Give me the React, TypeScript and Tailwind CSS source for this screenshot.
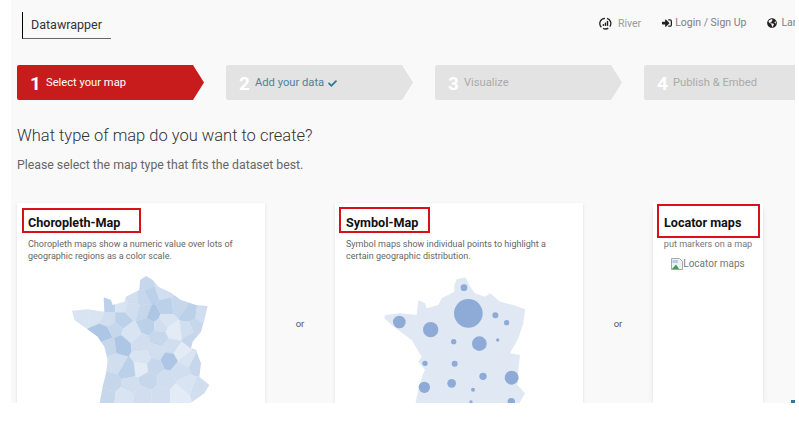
import React from 'react';
import { FaCheck, FaGlobeAmericas, FaSignInAlt } from 'react-icons/fa';

type Point = [number, number];

const SHADES = ['#adc6e5', '#bbd0e9', '#c6d7ec', '#d0deef', '#d9e4f3', '#e3ebf6'];

// x, y, shade index
const DEPARTMENTS: [number, number, number][] = [
    [225, 40, 2], [240, 72, 1], [275, 60, 3], [115, 105, 1], [185, 85, 3], [150, 105, 4], [215, 85, 2],
    [30, 130, 4], [75, 130, 4], [115, 150, 3], [150, 150, 1], [185, 115, 3], [220, 125, 2], [245, 135, 0],
    [230, 165, 1], [285, 115, 1], [325, 110, 2], [355, 130, 1], [395, 135, 3], [375, 170, 2], [270, 165, 3],
    [285, 150, 4], [310, 185, 5], [350, 180, 3], [365, 205, 2], [100, 190, 0], [130, 175, 2], [180, 190, 4],
    [150, 225, 0], [115, 230, 2], [210, 220, 3], [265, 205, 2], [300, 230, 3], [330, 250, 5], [295, 270, 0],
    [255, 245, 3], [215, 265, 4], [210, 295, 5], [170, 300, 1], [135, 280, 3], [250, 290, 2], [375, 285, 2],
    [345, 270, 4], [330, 300, 3], [280, 330, 3], [230, 330, 2], [180, 345, 3], [120, 340, 2], [105, 375, 2],
    [160, 380, 4], [215, 375, 3], [270, 375, 3], [325, 375, 5], [380, 355, 3], [350, 345, 4],
];

const CHORO_OUTLINE: Point[] = [
    [207, 30], [225, 18], [245, 30], [262, 50], [300, 68], [330, 90], [375, 105], [410, 108], [400, 150], [390, 185],
    [365, 215], [360, 235], [375, 240], [390, 280], [385, 320], [415, 345], [400, 370], [350, 405], [85, 405], [95, 350],
    [105, 310], [110, 270], [100, 230], [80, 200], [45, 175], [10, 150], [3, 122], [50, 118], [100, 125], [98, 82],
    [120, 90], [125, 105], [160, 95], [165, 80], [205, 60],
];

const SYMBOL_OUTLINE: Point[] = [
    [238, 45], [245, 28], [272, 22], [285, 50], [300, 70], [330, 80], [345, 70], [375, 95], [415, 105], [450, 118],
    [445, 160], [430, 205], [405, 250], [435, 255], [430, 300], [427, 345], [450, 370], [430, 405], [120, 405], [135, 340],
    [145, 310], [150, 300], [130, 275], [140, 260], [110, 210], [50, 165], [28, 145], [30, 135], [75, 130], [125, 135],
    [130, 90], [150, 100], [155, 115], [190, 105], [200, 85], [238, 65],
];

// x, y, r
const BUBBLES: [number, number, number][] = [
    [267, 53, 10], [280, 130, 43], [361, 136, 9], [395, 158, 8], [73, 156, 19], [167, 179, 23], [236, 215, 8],
    [313, 221, 22], [368, 210, 5], [150, 280, 8], [239, 281, 9], [324, 319, 11], [410, 323, 21], [230, 340, 13],
    [148, 352, 17], [294, 359, 6], [409, 395, 11], [288, 396, 5],
];

const toPoints = (pts: Point[]) => pts.map((p) => p.join(',')).join(' ');

// keep the part of the polygon that is nearer to a than to b
const clipCell = (poly: Point[], a: Point, b: Point) => {
    const mx = (a[0] + b[0]) / 2;
    const my = (a[1] + b[1]) / 2;
    const nx = b[0] - a[0];
    const ny = b[1] - a[1];
    const side = (p: Point) => (p[0] - mx) * nx + (p[1] - my) * ny;
    const out: Point[] = [];
    poly.forEach((p, i) => {
        const q = poly[(i + 1) % poly.length];
        const sp = side(p);
        const sq = side(q);
        if (sp <= 0) out.push(p);
        if (sp < 0 !== sq < 0) {
            const t = sp / (sp - sq);
            out.push([p[0] + (q[0] - p[0]) * t, p[1] + (q[1] - p[1]) * t]);
        }
    });
    return out;
};

const departmentCell = (index: number) => {
    const [x, y] = DEPARTMENTS[index];
    let cell: Point[] = [[0, 0], [450, 0], [450, 405], [0, 405]];
    DEPARTMENTS.forEach((d, i) => {
        if (i !== index) cell = clipCell(cell, [x, y], [d[0], d[1]]);
    });
    return cell;
};

const ChoroplethMap = () => (
    <svg viewBox="0 0 450 405" className="w-[150px] h-[135px] block blur-[0.6px]">
        <defs>
            <clipPath id="choro-france">
                <polygon points={toPoints(CHORO_OUTLINE)} />
            </clipPath>
        </defs>
        <g clipPath="url(#choro-france)">
            {DEPARTMENTS.map((d, i) => (
                <polygon key={i} points={toPoints(departmentCell(i))} fill={SHADES[d[2]]} stroke={SHADES[d[2]]} strokeWidth={1} />
            ))}
        </g>
    </svg>
);

const SymbolMap = () => (
    <svg viewBox="0 0 450 405" className="w-[150px] h-[135px] block blur-[0.3px]">
        <polygon points={toPoints(SYMBOL_OUTLINE)} fill="#e0e8f4" />
        {BUBBLES.map(([cx, cy, r], i) => (
            <circle key={i} cx={cx} cy={cy} r={r} fill="#8eaad6" />
        ))}
    </svg>
);

const RiverIcon = () => (
    <svg viewBox="0 0 14 14" className="w-[13px] h-[13px] shrink-0">
        <path d="M2.6 11A5.6 5.6 0 0 1 6.4 1.4M8.6 1.6A5.6 5.6 0 0 1 11.6 10.4M10 12A5.6 5.6 0 0 1 4.4 12.2" fill="none" stroke="#222" strokeWidth="1.4" />
        <rect x="4" y="7.6" width="1.5" height="2" fill="#222" />
        <rect x="6.2" y="6" width="1.5" height="3.6" fill="#222" />
        <rect x="8.4" y="4.2" width="1.5" height="5.4" fill="#222" />
    </svg>
);

const BrokenImage = () => (
    <svg viewBox="0 0 12 12" className="w-[12px] h-[12px] shrink-0">
        <path d="M0.5 0.5H8.5L11.5 3.5V11.5H0.5Z" fill="#eef2f6" stroke="#a8a8a8" />
        <path d="M1 11L5 6.5L8 11Z" fill="#4c9a46" />
        <path d="M1.5 2H7V5H1.5Z" fill="#b7cbe8" />
    </svg>
);

const STEPS = [
    { n: '1', label: 'Select your map', active: true },
    { n: '2', label: 'Add your data', done: true },
    { n: '3', label: 'Visualize' },
    { n: '4', label: 'Publish & Embed' },
];

export default function App() {
    return (
        <div className="w-[799px] h-[430px] bg-white overflow-hidden font-['Roboto',sans-serif]">
            <div className="relative ml-[11px] w-[784px] h-[403px] bg-[#f9f9f9] overflow-hidden pl-[6px]">
                <div className="flex h-[65px] items-start">
                    <div className="mt-[12px] ml-[5px] w-[89px] h-[27px] border-l border-b border-l-black border-b-[#666] pl-[8px] text-[12.5px] leading-[26px] text-[#333] shrink-0">
                        Datawrapper
                    </div>
                    <div className="flex items-center ml-[488px] mt-[16px] h-[14px] text-[10.5px] whitespace-nowrap">
                        <RiverIcon />
                        <span className="ml-[6px] text-[#999] mt-[1px]">River</span>
                        <FaSignInAlt size={10} className="ml-[21px] text-[#222] shrink-0" />
                        <span className="ml-[3px] text-[#808080]">Login / Sign Up</span>
                        <FaGlobeAmericas size={10} className="ml-[21px] text-[#222] shrink-0" />
                        <span className="ml-[4px] text-[#808080]">Language</span>
                    </div>
                </div>

                <div className="flex gap-[22px] w-[900px]">
                    {STEPS.map((s) => (
                        <div
                            key={s.n}
                            className={`w-[187px] h-[35px] shrink-0 rounded-[2px] flex items-center pl-[13px] pt-[1px] [clip-path:polygon(0_0,176px_0,187px_50%,176px_100%,0_100%)] ${s.active ? 'bg-[#c81c1c]' : 'bg-[#e3e3e3]'}`}
                        >
                            <span className="w-[16px] text-[19px] font-bold text-white leading-none">{s.n}</span>
                            <span className={`text-[11.2px] ${s.active ? 'text-white' : s.done ? 'text-[#4f8297]' : 'text-[#aaa]'}`}>{s.label}</span>
                            {s.done && <FaCheck size={9} className="ml-[4px] text-[#2f7a99]" />}
                        </div>
                    ))}
                </div>

                <h1 className="mt-[24px] text-[16.5px] leading-[24px] font-light text-[#333]">What type of map do you want to create?</h1>
                <p className="mt-[9px] text-[12.3px] leading-[16px] text-[#666]">Please select the map type that fits the dataset best.</p>

                <div className="flex mt-[30px] h-[200px]">
                    <div className="w-[248px] bg-white shadow-sm px-[11px] shrink-0">
                        <h2 className="mt-[12px] text-[12.6px] leading-[15px] font-bold text-[#111]">Choropleth-Map</h2>
                        <p className="mt-[9px] text-[9px] leading-[11.5px] text-[#666]">
                            Choropleth maps show a numeric value over lots of<br />geographic regions as a color scale.
                        </p>
                        <div className="mt-[8px] ml-[43px]">
                            <ChoroplethMap />
                        </div>
                    </div>
                    <div className="w-[70px] shrink-0 pt-[115px] text-center text-[9.5px] leading-[12px] text-[#555]">or</div>
                    <div className="w-[248px] bg-white shadow-sm px-[11px] shrink-0">
                        <h2 className="mt-[12px] text-[12.6px] leading-[15px] font-bold text-[#111]">Symbol-Map</h2>
                        <p className="mt-[9px] text-[9px] leading-[11.5px] text-[#666]">
                            Symbol maps show individual points to highlight a<br />certain geographic distribution.
                        </p>
                        <div className="mt-[8px] ml-[29px]">
                            <SymbolMap />
                        </div>
                    </div>
                    <div className="w-[70px] shrink-0 pt-[115px] text-center text-[9.5px] leading-[12px] text-[#555]">or</div>
                    <div className="w-[110px] bg-white shadow-md shrink-0 text-center">
                        <h2 className="mt-[12px] pl-[11px] text-left text-[12.6px] leading-[15px] font-bold text-[#111]">Locator maps</h2>
                        <p className="mt-[9px] text-[9.1px] leading-[11.5px] text-[#777]">put markers on a map</p>
                        <div className="mt-[7px] flex items-center justify-center text-[10px] leading-[12px] text-[#777]">
                            <BrokenImage />
                            <span>Locator maps</span>
                        </div>
                    </div>
                </div>

                {/* red annotation boxes drawn over the cards */}
                <div className="absolute left-[11px] top-[208px] w-[119px] h-[25px] border-2 border-[#d81018]" />
                <div className="absolute left-[328px] top-[207px] w-[91px] h-[26px] border-2 border-[#d81018]" />
                <div className="absolute left-[646px] top-[204px] w-[103px] h-[34px] border-2 border-[#d81018]" />
                <div className="absolute right-0 bottom-0 w-[4px] h-[3px] bg-[#2f7a99]" />
            </div>
        </div>
    );
}
